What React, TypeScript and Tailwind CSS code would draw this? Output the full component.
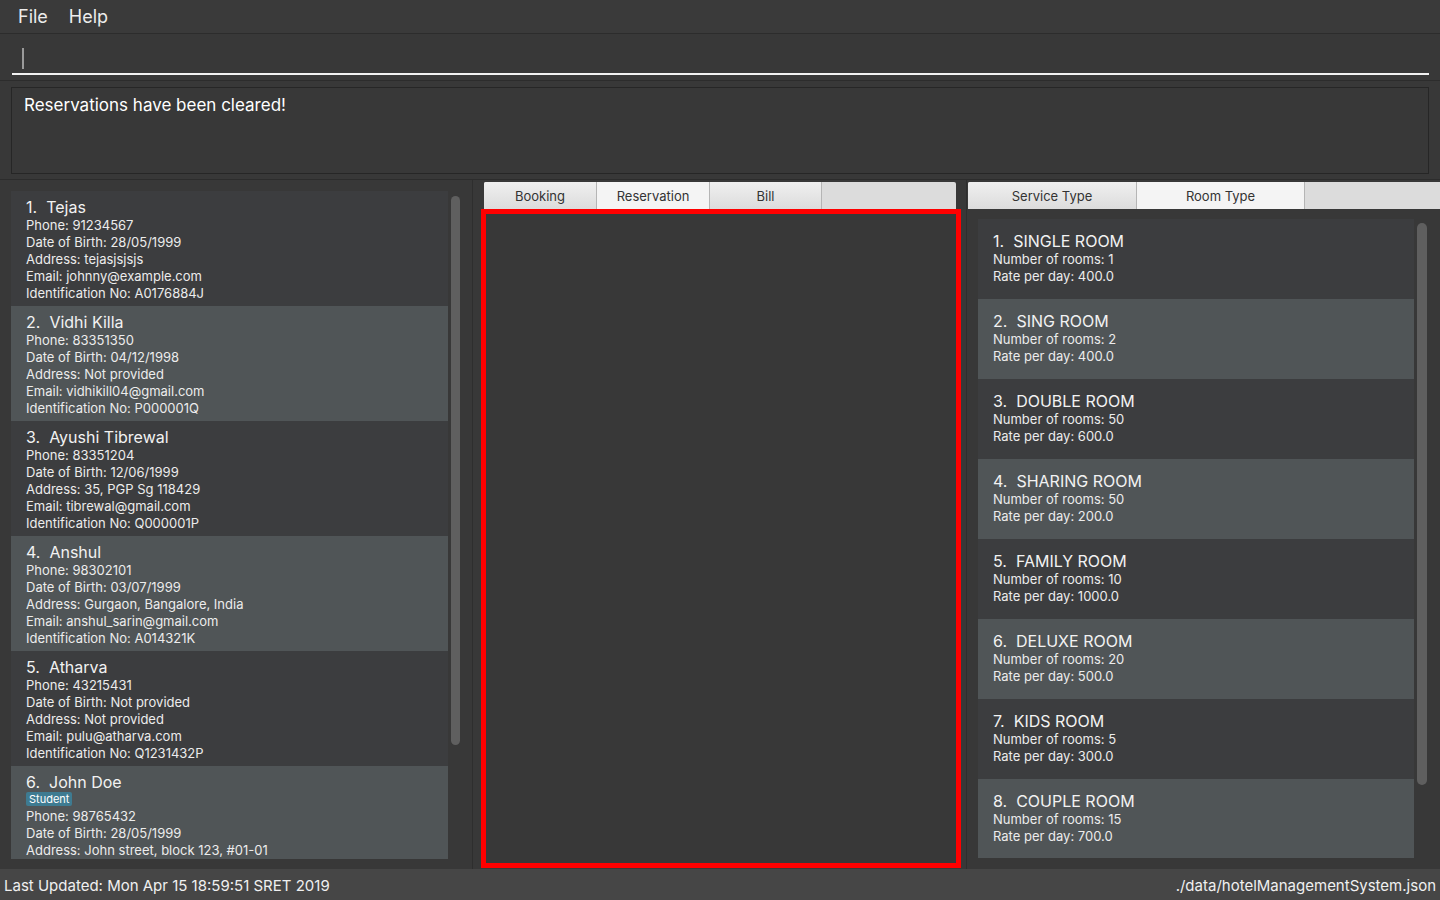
import React from "react";

type Person = {
  name: string;
  tag?: string;
  phone: string;
  dob: string;
  address: string;
  email?: string;
  id?: string;
};

const people: Person[] = [
  { name: "Tejas", phone: "91234567", dob: "28/05/1999", address: "tejasjsjsjs", email: "johnny@example.com", id: "A0176884J" },
  { name: "Vidhi Killa", phone: "83351350", dob: "04/12/1998", address: "Not provided", email: "vidhikill04@gmail.com", id: "P000001Q" },
  { name: "Ayushi Tibrewal", phone: "83351204", dob: "12/06/1999", address: "35, PGP Sg 118429", email: "tibrewal@gmail.com", id: "Q000001P" },
  { name: "Anshul", phone: "98302101", dob: "03/07/1999", address: "Gurgaon, Bangalore, India", email: "anshul_sarin@gmail.com", id: "A014321K" },
  { name: "Atharva", phone: "43215431", dob: "Not provided", address: "Not provided", email: "pulu@atharva.com", id: "Q1231432P" },
  // rest of this card is scrolled out of view
  { name: "John Doe", tag: "Student", phone: "98765432", dob: "28/05/1999", address: "John street, block 123, #01-01" },
];

const rooms = [
  { name: "SINGLE ROOM", count: 1, rate: "400.0" },
  { name: "SING ROOM", count: 2, rate: "400.0" },
  { name: "DOUBLE ROOM", count: 50, rate: "600.0" },
  { name: "SHARING ROOM", count: 50, rate: "200.0" },
  { name: "FAMILY ROOM", count: 10, rate: "1000.0" },
  { name: "DELUXE ROOM", count: 20, rate: "500.0" },
  { name: "KIDS ROOM", count: 5, rate: "300.0" },
  { name: "COUPLE ROOM", count: 15, rate: "700.0" },
];

function Tab({ label, active, w }: { label: string; active?: boolean; w: string }) {
  return (
    <div
      className={`${w} h-full flex items-center justify-center pt-[3px] text-[13px] text-[#333] border-r border-[#b5b5b5] ${
        active ? "bg-[#f4f4f4]" : "bg-gradient-to-b from-[#f0f0f0] to-[#dcdcdc]"
      }`}
    >
      {label}
    </div>
  );
}

export default function App() {
  return (
    <div
      className="w-[1440px] h-[900px] bg-[#383838] text-[#f0f0f0] flex flex-col overflow-hidden"
      style={{ fontFamily: "Inter, 'Open Sans', sans-serif" }}
    >
      {/* menu bar */}
      <div className="h-[34px] shrink-0 bg-[#3a3a3a] flex items-center gap-[21px] pl-[18px] text-[18px] text-[#ececec] border-b border-[#2c2c2c]">
        <span>File</span>
        <span>Help</span>
      </div>

      {/* command box */}
      <div className="h-[47px] shrink-0 pl-[12px] pr-[11px] pt-[10px] border-b border-[#2c2c2c]">
        <div className="h-[31px] border-b-2 border-[#f2f2f2] flex items-center pl-[10px]">
          <div className="w-[2px] h-[21px] bg-[#9a9a9a]" />
        </div>
      </div>

      {/* result display */}
      <div className="h-[99px] shrink-0 px-[11px] pt-[6px] pb-[5px] border-b border-[#2c2c2c]">
        <div className="h-full border border-[#262626] px-[12px] pt-[5px] text-[17px] text-white">
          Reservations have been cleared!
        </div>
      </div>

      {/* main panels */}
      <div className="flex-1 flex min-h-0">
        {/* people list */}
        <div className="w-[473px] shrink-0 border-r border-[#2e2e2e] flex pl-[11px] pr-[12px] pt-[11px] pb-[10px] gap-[3px]">
          <div className="w-[437px] flex flex-col overflow-hidden">
            {people.map((p, i) => (
              <div
                key={p.name}
                className={`h-[115px] shrink-0 pl-[15px] pt-[6px] ${i % 2 === 0 ? "bg-[#3c3d3f]" : "bg-[#505557]"}`}
              >
                <div className="text-[16px] leading-[20px] text-[#f2f2f2]">
                  {i + 1}.&nbsp; {p.name}
                </div>
                {p.tag && (
                  <div className="h-[16px] flex items-start">
                    <span className="bg-[#3e7b91] text-white text-[11px] leading-[14px] px-[3px] rounded-[2px]">
                      {p.tag}
                    </span>
                  </div>
                )}
                <div className="text-[13px] leading-[17px] text-[#ececec]">
                  <div>Phone: {p.phone}</div>
                  <div>Date of Birth: {p.dob}</div>
                  <div>Address: {p.address}</div>
                  {p.email && <div>Email: {p.email}</div>}
                  {p.id && <div>Identification No: {p.id}</div>}
                </div>
              </div>
            ))}
          </div>
          <div className="pt-[5px]">
            <div className="w-[9px] h-[549px] rounded-full bg-[#5f5f5f]" />
          </div>
        </div>

        {/* reservation tab pane */}
        <div className="w-[494px] shrink-0 border-r border-[#2e2e2e] flex flex-col pl-[8px] pr-[5px] pt-[2px] pb-[1px]">
          <div className="h-[27px] ml-[3px] mr-[5px] flex bg-[#dcdcdc] rounded-t-[2px] overflow-hidden">
            <Tab label="Booking" w="w-[113px]" />
            <Tab label="Reservation" active w="w-[113px]" />
            <Tab label="Bill" w="w-[112px]" />
          </div>
          <div className="flex-1 border-[5px] border-[#ff0000] bg-[#383838]" />
        </div>

        {/* room type tab pane */}
        <div className="flex-1 flex flex-col pt-[2px]">
          <div className="h-[27px] ml-[1px] flex bg-[#dcdcdc] rounded-tl-[2px] overflow-hidden">
            <Tab label="Service Type" w="w-[169px]" />
            <Tab label="Room Type" active w="w-[168px]" />
          </div>
          <div className="flex pl-[11px] pt-[10px] gap-[3px]">
            <div className="w-[436px] h-[639px] flex flex-col overflow-hidden">
              {rooms.map((r, i) => (
                <div
                  key={r.name}
                  className={`h-[80px] shrink-0 pl-[15px] pt-[12px] ${i % 2 === 0 ? "bg-[#3c3d3f]" : "bg-[#505557]"}`}
                >
                  <div className="text-[16px] leading-[20px] text-[#f2f2f2]">
                    {i + 1}.&nbsp; {r.name}
                  </div>
                  <div className="text-[13px] leading-[17px] text-[#ececec]">
                    <div>Number of rooms: {r.count}</div>
                    <div>Rate per day: {r.rate}</div>
                  </div>
                </div>
              ))}
            </div>
            <div className="pt-[4px]">
              <div className="w-[10px] h-[562px] rounded-full bg-[#5f5f5f]" />
            </div>
          </div>
        </div>
      </div>

      {/* status bar */}
      <div className="h-[31px] shrink-0 bg-[#464646] flex items-center justify-between px-[4px] pt-[3px] text-[15px] text-[#f0f0f0]">
        <span>Last Updated: Mon Apr 15 18:59:51 SRET 2019</span>
        <span>./data/hotelManagementSystem.json</span>
      </div>
    </div>
  );
}
